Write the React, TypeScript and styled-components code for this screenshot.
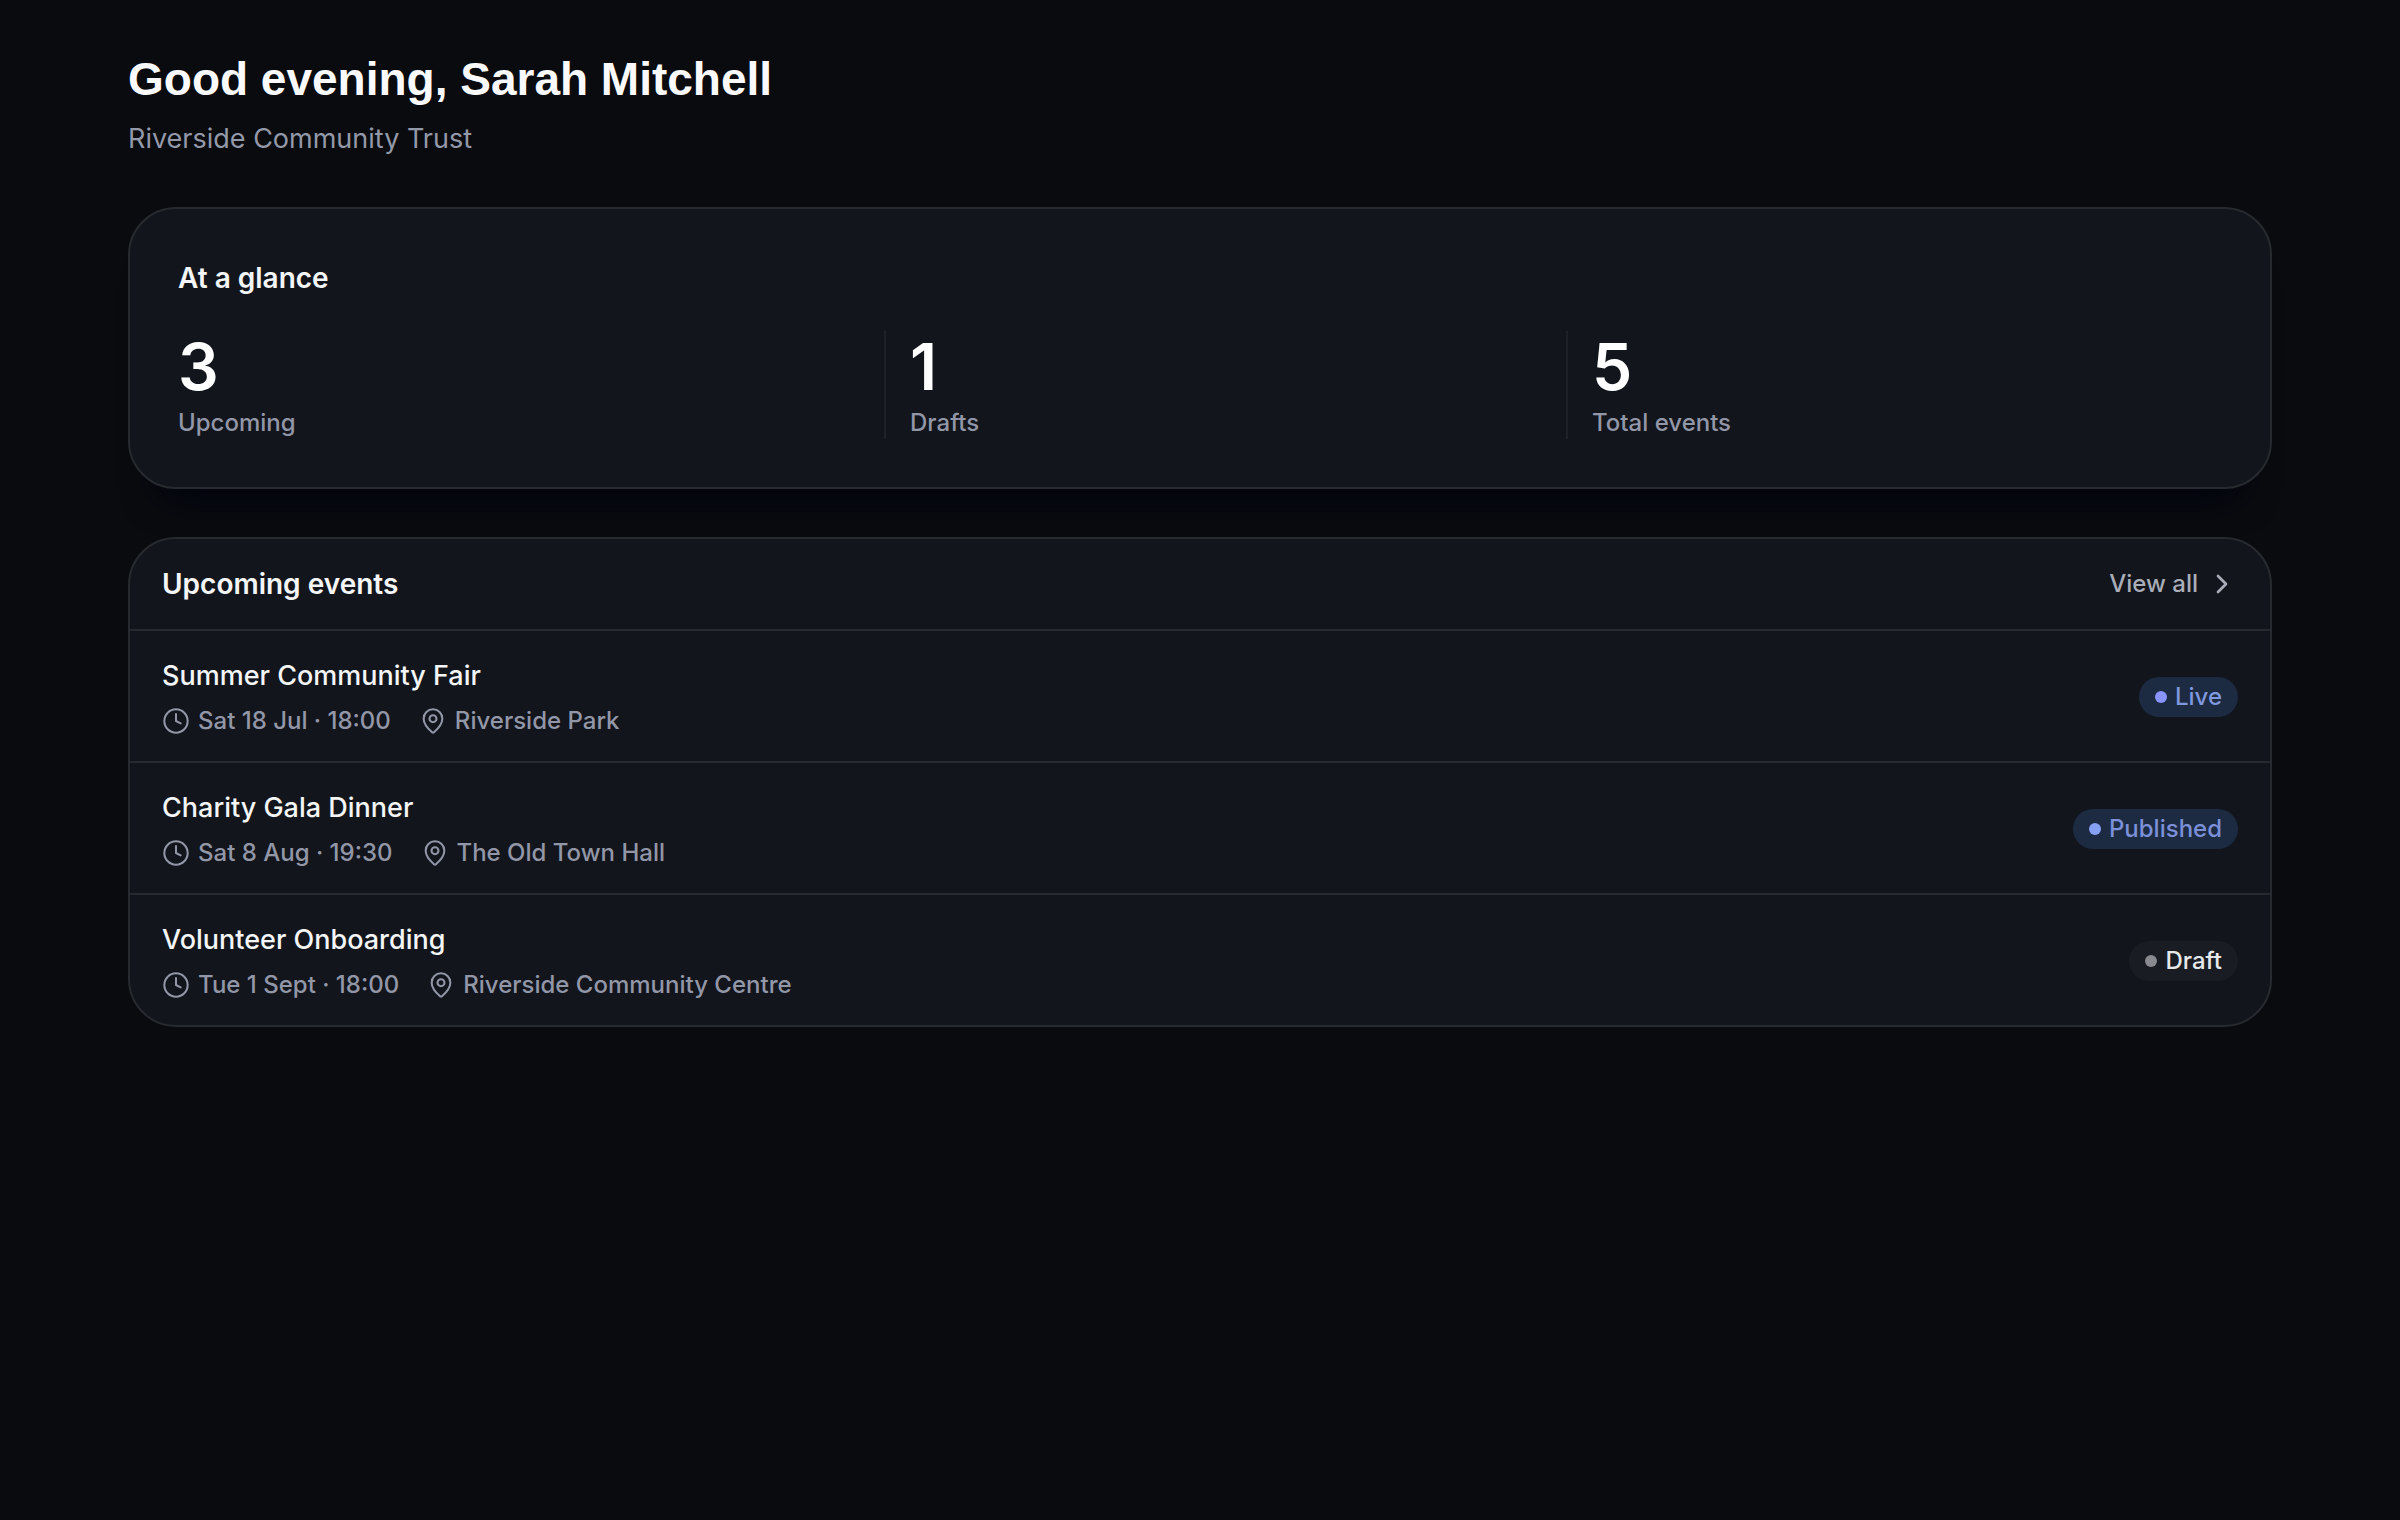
import React from 'react';
import styled, { createGlobalStyle } from 'styled-components';
import { ChevronRight, Clock, MapPin } from 'lucide-react';

const GlobalStyle = createGlobalStyle`
  *, *::before, *::after { box-sizing: border-box; }
  body {
    margin: 0;
    min-height: 100vh;
    background: #090b0f;
    color: #f4f5f7;
    font-family: Inter, 'Liberation Sans', sans-serif;
    font-size: 24px;
  }
  h1, h2, h3, p, dl, dt, dd, ul { margin: 0; padding: 0; }
`;

const Page = styled.main`
  display: flex;
  flex-direction: column;
  gap: 48px;
  padding: 51px 128px;
`;

const Greeting = styled.header`
  display: flex;
  flex-direction: column;
  gap: 12px;
`;

const Title = styled.h1`
  font-family: 'Liberation Sans', Arial, sans-serif;
  font-size: 46px;
  line-height: 56px;
  font-weight: 700;
  color: #fafafc;
`;

const Organisation = styled.p`
  font-size: 27px;
  line-height: 40px;
  color: #9499a9;
`;

const Card = styled.section`
  border: 2px solid #272a2f;
  border-radius: 48px;
  background: #12151c;
  overflow: hidden;
`;

const GlanceCard = styled(Card)`
  padding: 48px;
  box-shadow: 0 40px 36px -32px #01030e;
`;

const CardTitle = styled.h2`
  font-size: 28px;
  line-height: 40px;
  font-weight: 600;
`;

const Stats = styled.dl`
  display: grid;
  grid-template-columns: repeat(3, 1fr);
  gap: 2px;
  margin-top: 32px;
`;

const Stat = styled.div`
  display: flex;
  flex-direction: column-reverse;
  gap: 4px;
  margin-left: 24px;
  padding-left: 24px;
  border-left: 2px solid #1e2128;

  &:first-child {
    margin-left: 0;
    padding-left: 0;
    border-left: 0;
  }
`;

const StatLabel = styled.dt`
  line-height: 32px;
  font-weight: 500;
  color: #9297a8;
`;

const StatValue = styled.dd`
  font-size: 64px;
  line-height: 72px;
  font-weight: 600;
  color: #ffffff;
`;

const Stack = styled.div`
  display: flex;
  flex-direction: column;
  gap: 48px;
`;

const GlanceHeader = styled.div`
  padding: 1px 0;
`;

const CardHeader = styled.div`
  display: flex;
  align-items: center;
  justify-content: space-between;
  padding: 25px 32px;
`;

const ViewAll = styled.a`
  display: flex;
  align-items: center;
  gap: 8px;
  line-height: 32px;
  font-weight: 500;
  color: #a9adb8;
  text-decoration: none;
`;

const EventList = styled.ul`
  list-style: none;
`;

const EventRow = styled.li`
  display: flex;
  align-items: center;
  justify-content: space-between;
  padding: 25px 32px 24px;
  border-top: 2px solid #272a2f;
`;

const EventInfo = styled.div`
  display: flex;
  flex-direction: column;
  gap: 9px;
`;

const EventName = styled.h3`
  font-size: 27px;
  line-height: 40px;
  font-weight: 500;
`;

const Meta = styled.p`
  display: flex;
  gap: 28px;
  line-height: 32px;
  font-weight: 500;
  color: #9297a8;
`;

const MetaItem = styled.span`
  display: flex;
  align-items: center;
  gap: 8px;
`;

const tones = {
  live: { background: '#1c2a42', text: '#7f97dc', dot: '#8a94ff' },
  published: { background: '#1c2a42', text: '#7b90d8', dot: '#86a0f4' },
  draft: { background: '#191c22', text: '#e6e8ec', dot: '#888a90' },
};

const Badge = styled.span<{ $tone: keyof typeof tones }>`
  display: flex;
  align-items: center;
  gap: 8px;
  padding: 4px 16px;
  border-radius: 20px;
  line-height: 32px;
  font-weight: 500;
  background: ${(p) => tones[p.$tone].background};
  color: ${(p) => tones[p.$tone].text};

  &::before {
    content: '';
    width: 12px;
    height: 12px;
    border-radius: 50%;
    background: ${(p) => tones[p.$tone].dot};
  }
`;

const stats = [
  { label: 'Upcoming', value: 3 },
  { label: 'Drafts', value: 1 },
  { label: 'Total events', value: 5 },
];

const events: { name: string; date: string; place: string; status: string; tone: keyof typeof tones }[] = [
  { name: 'Summer Community Fair', date: 'Sat 18 Jul · 18:00', place: 'Riverside Park', status: 'Live', tone: 'live' },
  { name: 'Charity Gala Dinner', date: 'Sat 8 Aug · 19:30', place: 'The Old Town Hall', status: 'Published', tone: 'published' },
  { name: 'Volunteer Onboarding', date: 'Tue 1 Sept · 18:00', place: 'Riverside Community Centre', status: 'Draft', tone: 'draft' },
];

export default function App() {
  return (
    <>
      <GlobalStyle />
      <Page>
        <Greeting>
          <Title>Good evening, Sarah Mitchell</Title>
          <Organisation>Riverside Community Trust</Organisation>
        </Greeting>
        <Stack>
          <GlanceCard>
            <GlanceHeader>
              <CardTitle>At a glance</CardTitle>
            </GlanceHeader>
            <Stats>
              {stats.map((s) => (
                <Stat key={s.label}>
                  <StatLabel>{s.label}</StatLabel>
                  <StatValue>{s.value}</StatValue>
                </Stat>
              ))}
            </Stats>
          </GlanceCard>
          <Card>
            <CardHeader>
              <CardTitle>Upcoming events</CardTitle>
              <ViewAll href="#events">
                View all
                <ChevronRight size={32} strokeWidth={2} aria-hidden="true" />
              </ViewAll>
            </CardHeader>
            <EventList id="events">
              {events.map((e) => (
                <EventRow key={e.name}>
                  <EventInfo>
                    <EventName>{e.name}</EventName>
                    <Meta>
                      <MetaItem>
                        <Clock size={28} strokeWidth={1.75} aria-hidden="true" />
                        {e.date}
                      </MetaItem>
                      <MetaItem>
                        <MapPin size={28} strokeWidth={1.75} aria-hidden="true" />
                        {e.place}
                      </MetaItem>
                    </Meta>
                  </EventInfo>
                  <Badge $tone={e.tone}>{e.status}</Badge>
                </EventRow>
              ))}
            </EventList>
          </Card>
        </Stack>
      </Page>
    </>
  );
}
